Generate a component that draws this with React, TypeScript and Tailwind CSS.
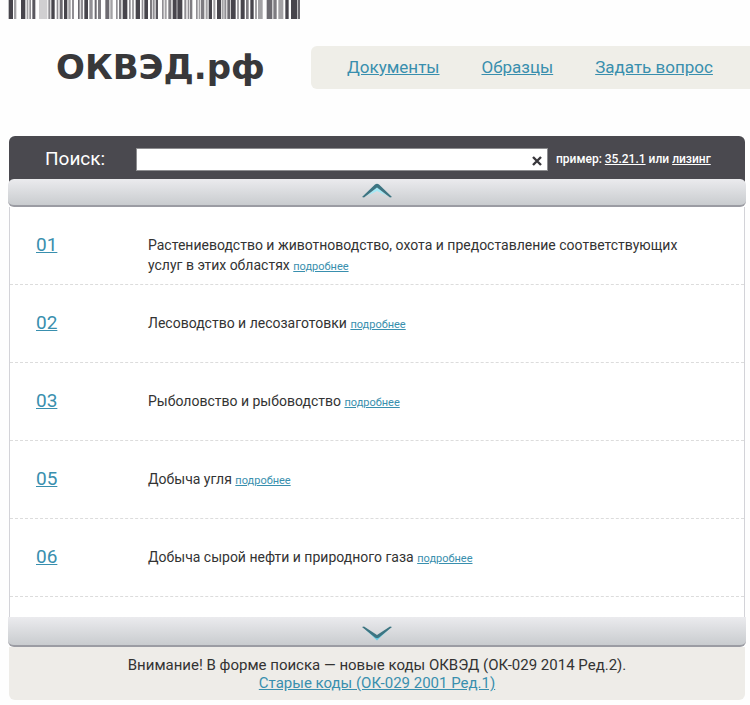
import React, { useState } from 'react';

const ROWS = [
  { code: '01', title: 'Растениеводство и животноводство, охота и предоставление соответствующих услуг в этих областях' },
  { code: '02', title: 'Лесоводство и лесозаготовки' },
  { code: '03', title: 'Рыболовство и рыбоводство' },
  { code: '05', title: 'Добыча угля' },
  { code: '06', title: 'Добыча сырой нефти и природного газа' },
];

const NAV = ['Документы', 'Образцы', 'Задать вопрос'];

// [x, width, opacity]
const BARS = [
  [2, 13, 1], [18, 7, 0.5], [39, 13, 1], [56, 5, 0.5], [64, 5, 0.6], [73, 9, 0.9],
  [93, 25, 0.25], [121, 6, 0.6], [130, 10, 1], [146, 5, 0.6], [155, 9, 0.8], [168, 10, 1],
  [181, 7, 0.5], [192, 6, 0.6], [210, 5, 0.8], [218, 7, 0.6], [229, 11, 1], [244, 10, 0.6],
  [260, 6, 0.8], [270, 9, 0.7], [292, 12, 0.8], [307, 7, 0.5], [324, 5, 0.6], [333, 7, 0.7],
  [344, 14, 1], [363, 5, 0.6], [372, 6, 0.5], [383, 13, 1], [401, 5, 0.6], [409, 11, 1],
  [426, 6, 0.7], [434, 6, 0.6], [443, 7, 0.9], [462, 5, 0.6], [470, 6, 0.5], [481, 9, 0.7],
  [494, 12, 1], [508, 15, 1], [529, 6, 0.6], [539, 5, 0.6], [546, 7, 0.7], [564, 5, 0.6],
  [572, 5, 0.5], [579, 10, 0.7], [593, 6, 0.5], [602, 10, 1], [616, 6, 0.5], [627, 12, 1],
  [641, 6, 0.5], [649, 6, 0.6], [658, 9, 0.8], [669, 14, 1], [687, 6, 0.5], [698, 12, 1],
  [714, 8, 0.7], [727, 10, 1], [741, 6, 0.5], [750, 14, 0.5], [776, 17, 0.8], [796, 10, 0.7],
  [811, 15, 0.5], [832, 10, 1], [849, 19, 1], [870, 6, 0.8],
];

const Barcode = () => (
  <svg width="292" height="19" viewBox="0 0 876 57" aria-hidden="true">
    {BARS.map(([x, w, opacity]) => (
      <rect key={x} x={x} y="0" width={w} height="57" fill="#47454c" fillOpacity={opacity} />
    ))}
  </svg>
);

const ArrowUp = () => (
  <svg width="32" height="16" viewBox="0 0 32 16" aria-hidden="true">
    <path d="M6 13 16 4l10 9-10-5z" fill="#a5e9f5" />
    <path d="M1 14 14 1.5Q16 0 18 1.5L31 14l-2 .5L16 4.5 3 14.5z" fill="#3d7582" />
  </svg>
);

const ArrowDown = () => (
  <svg width="32" height="16" viewBox="0 0 32 16" aria-hidden="true">
    <path d="M4 4 16 15.5 28 4l-12 8z" fill="#68cbe2" />
    <path d="M1 2 3 1.5 16 10 29 1.5l2 .5-13 10.5Q16 14 14 12.5z" fill="#3d7582" />
  </svg>
);

const App: React.FC = () => {
  const [query, setQuery] = useState('');

  return (
    <div className="min-h-screen bg-[#fefefe] font-['Trebuchet_MS','Roboto',sans-serif] text-[#333333]">
      <header className="pl-2">
        <Barcode />
        <div className="flex items-center justify-between pt-6">
          <h1 className="pl-12 font-['DejaVu_Sans',sans-serif] text-[34px] leading-12 font-bold text-[#38383a]">ОКВЭД.рф</h1>
          <nav className="flex h-[43px] w-[439px] items-center gap-[42px] rounded-l-md bg-[#efeee8] pt-px pl-9 text-[17px] text-[#398fae]">
            {NAV.map((item) => (
              <a key={item} href="#" className="whitespace-nowrap underline">{item}</a>
            ))}
          </nav>
        </div>
      </header>

      <main className="mt-[45px] mr-1 ml-2">
        <form className="mx-px flex h-[50px] items-start rounded-t-md bg-[#4a494f] pt-3 pl-9 text-white" onSubmit={(e) => e.preventDefault()}>
          <label htmlFor="search" className="w-[91px] text-[19px] leading-[22px]">Поиск:</label>
          <div className="relative flex-1">
            <input
              id="search"
              value={query}
              onChange={(e) => setQuery(e.target.value)}
              className="block h-[23px] w-full border border-[#8d8d90] bg-white pr-6 pl-2 text-sm text-[#333333] outline-none"
            />
            <button type="button" aria-label="Очистить" onClick={() => setQuery('')} className="absolute top-2 right-1.5">
              <svg width="10" height="10" viewBox="0 0 10 10">
                <path d="M1 1l8 8M9 1L1 9" stroke="#38373c" strokeWidth="2.4" />
              </svg>
            </button>
          </div>
          <p className="w-[197px] pl-2 text-xs leading-[22px] font-medium whitespace-nowrap">
            пример: <a href="#" className="underline">35.21.1</a> или <a href="#" className="underline">лизинг</a>
          </p>
        </form>

        <button type="button" aria-label="Вверх" className="relative -mt-[7px] flex h-[28px] w-full justify-center rounded-md border-b-2 border-[#9b9ca3] bg-linear-to-b from-[#ebebee] to-[#c9cccf] pt-1">
          <ArrowUp />
        </button>

        <div className="mx-px border-x border-[#d3d3d8] bg-white pb-5">
          <ul>
            {ROWS.map((row) => (
              <li key={row.code} className="flex min-h-[78px] items-start border-b border-dashed border-[#dcdcdc] pt-[26px] pl-[26px]">
                <a href="#" className="w-28 shrink-0 text-[19px] leading-6 text-[#398fae] underline">{row.code}</a>
                <p className="max-w-[540px] pt-[2px] text-[14px] leading-5">
                  {row.title} <a href="#" className="text-[11px] text-[#398fae] underline">подробнее</a>
                </p>
              </li>
            ))}
          </ul>
        </div>

        <button type="button" aria-label="Вниз" className="relative flex h-[30px] w-full justify-center rounded-b-md border-b-2 border-[#9b9ca3] bg-linear-to-b from-[#ebebee] to-[#c9cccf] pt-2">
          <ArrowDown />
        </button>

        <div className="mx-px rounded-b-md bg-[#eeece8] pt-[9px] pb-2 text-center text-[15px] leading-[18px]">
          <p>Внимание! В форме поиска — новые коды ОКВЭД (ОК-029 2014 Ред.2).</p>
          <a href="#" className="text-[#398fae] underline">Старые коды (ОК-029 2001 Ред.1)</a>
        </div>
      </main>
    </div>
  );
};

export default App;
